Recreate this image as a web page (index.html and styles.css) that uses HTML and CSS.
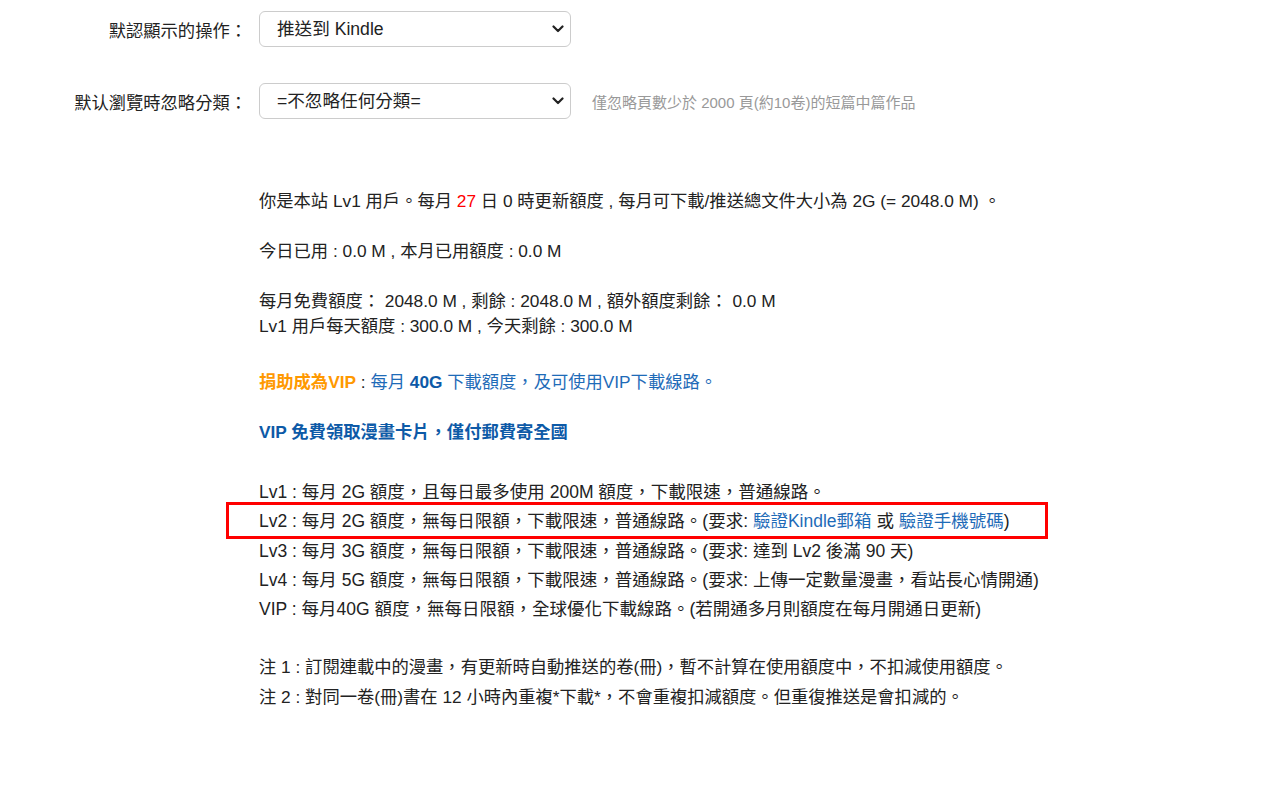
FILE: index.html
```html
<!DOCTYPE html>
<html lang="zh-Hant">
<head>
<meta charset="utf-8">
<title>設定</title>
<link rel="stylesheet" href="styles.css">
</head>
<body>
<div class="page">
  <div class="form">
    <div class="row">
      <label class="label">默認顯示的操作：</label>
      <div class="select-wrap">
        <select class="select"><option>推送到 Kindle</option></select>
        <svg class="chev" viewBox="0 0 12 8" width="12" height="8"><path d="M1.5 1.5 L6 6 L10.5 1.5" fill="none" stroke="#222" stroke-width="2.2" stroke-linecap="round" stroke-linejoin="round"/></svg>
      </div>
    </div>
    <div class="row">
      <label class="label">默认瀏覽時忽略分類：</label>
      <div class="select-wrap">
        <select class="select"><option>=不忽略任何分類=</option></select>
        <svg class="chev" viewBox="0 0 12 8" width="12" height="8"><path d="M1.5 1.5 L6 6 L10.5 1.5" fill="none" stroke="#222" stroke-width="2.2" stroke-linecap="round" stroke-linejoin="round"/></svg>
      </div>
      <span class="hint">僅忽略頁數少於 2000 頁(約10卷)的短篇中篇作品</span>
    </div>
  </div>

  <div class="info">
    <p class="para">你是本站 Lv1 用戶。每月 <span class="red">27</span> 日 0 時更新額度 , 每月可下載/推送總文件大小為 2G (= 2048.0 M) 。</p>
    <p class="para">今日已用 : 0.0 M , 本月已用額度 : 0.0 M</p>
    <p class="para">每月免費額度：&nbsp;2048.0 M , 剩餘 : 2048.0 M , 額外額度剩餘：&nbsp;0.0 M<br>Lv1 用戶每天額度 : 300.0 M , 今天剩餘 : 300.0 M</p>
    <p class="para vip-line"><span class="orange">捐助成為VIP</span> : <span class="blue">每月 <b class="dblue">40G</b> 下載額度，及可使用VIP下載線路。</span></p>
    <p class="para"><b class="dblue">VIP 免費領取漫畫卡片，僅付郵費寄全國</b></p>

    <ul class="levels">
      <li>Lv1 : 每月 2G 額度，且每日最多使用 200M 額度，下載限速，普通線路。</li>
      <li class="boxed">Lv2 : 每月 2G 額度，無每日限額，下載限速，普通線路。(要求: <a class="link" href="#">驗證Kindle郵箱</a> 或 <a class="link" href="#">驗證手機號碼</a>)</li>
      <li>Lv3 : 每月 3G 額度，無每日限額，下載限速，普通線路。(要求: 達到 Lv2 後滿 90 天)</li>
      <li>Lv4 : 每月 5G 額度，無每日限額，下載限速，普通線路。(要求: 上傳一定數量漫畫，看站長心情開通)</li>
      <li>VIP : 每月40G 額度，無每日限額，全球優化下載線路。(若開通多月則額度在每月開通日更新)</li>
    </ul>

    <ul class="notes">
      <li>注 1 : 訂閱連載中的漫畫，有更新時自動推送的卷(冊)，暫不計算在使用額度中，不扣減使用額度。</li>
      <li>注 2 : 對同一卷(冊)書在 12 小時內重複*下載*，不會重複扣減額度。但重復推送是會扣減的。</li>
    </ul>
  </div>
</div>
</body>
</html>
```

FILE: styles.css
```css
html, body {
  margin: 0;
  padding: 0;
  background: #fff;
}
body {
  font-family: "Liberation Sans", Arial, "Noto Sans CJK TC", sans-serif;
  font-size: 17.3px;
  color: #222;
}
.page {
  padding-top: 11px;
}
.form {
  display: flex;
  flex-direction: column;
  gap: 36px;
}
.row {
  display: flex;
  align-items: center;
  height: 36px;
}
.label {
  width: 247px;
  text-align: right;
  padding-right: 12px;
  box-sizing: content-box;
  color: #222;
}
.select-wrap {
  position: relative;
  width: 312px;
  height: 36px;
}
.select {
  appearance: none;
  -webkit-appearance: none;
  width: 100%;
  height: 100%;
  box-sizing: border-box;
  border: 1px solid #ccc;
  border-radius: 6px;
  background: #fff;
  padding: 0 30px 0 17px;
  font-family: "Liberation Sans", Arial, "Noto Sans CJK TC", sans-serif;
  font-size: 17.6px;
  color: #222;
}
.chev {
  position: absolute;
  right: 7px;
  top: 14px;
  pointer-events: none;
}
.hint {
  margin-left: 21px;
  font-size: 15px;
  color: #999;
}
.info {
  margin-left: 259px;
  padding-top: 70px;
}
.para {
  margin: 0 0 25px 0;
  line-height: 25px;
}
.vip-line {
  margin-top: 31px;
}
.red { color: #f00; }
.orange { color: #ff9900; font-weight: bold; }
.blue { color: #1e6bb8; }
.dblue { color: #0d5aa7; font-weight: bold; }
.levels, .notes {
  list-style: none;
  margin: 0;
  padding: 0;
}
.levels {
  margin-top: 33px;
  font-size: 17.5px;
}
.levels li, .notes li {
  line-height: 29.3px;
  position: relative;
}
.notes {
  margin-top: 29px;
}
.boxed::before {
  content: "";
  position: absolute;
  left: -33px;
  top: -5px;
  width: 822px;
  height: 37px;
  box-sizing: border-box;
  border: 3px solid #f00;
}
.link {
  color: #1e6bb8;
  text-decoration: none;
}
```
